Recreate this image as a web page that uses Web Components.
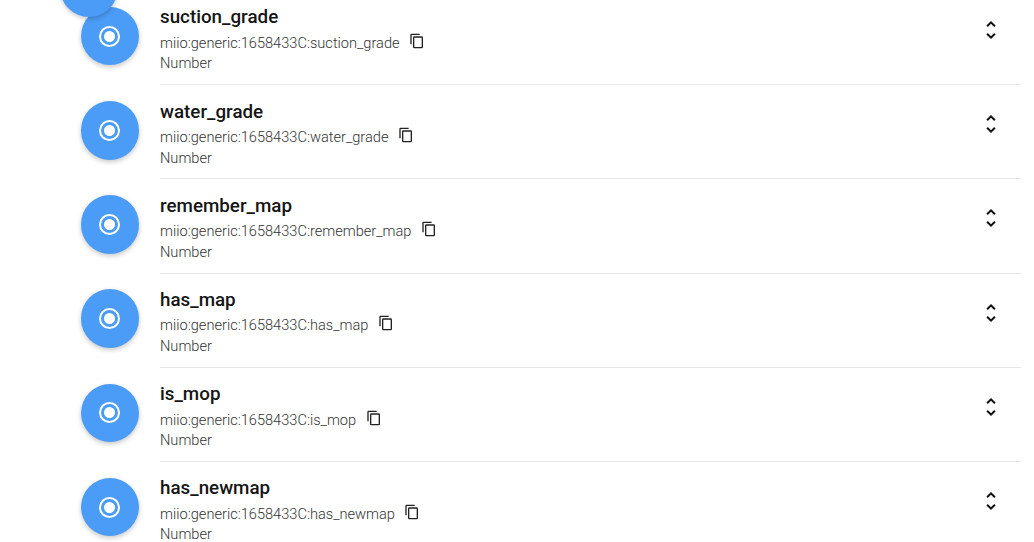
<!DOCTYPE html>
<html>
<head>
<meta charset="utf-8">
<title>Entities</title>
<style>
  html, body { margin: 0; height: 100%; overflow: hidden; background: #fff; }
  body { font-family: Roboto, sans-serif; }
</style>
</head>
<body>
<entity-list>
  <entity-row name="suction_grade"></entity-row>
  <entity-row name="water_grade"></entity-row>
  <entity-row name="remember_map"></entity-row>
  <entity-row name="has_map"></entity-row>
  <entity-row name="is_mop"></entity-row>
  <entity-row name="has_newmap"></entity-row>
</entity-list>

<script>
class EntityList extends HTMLElement {
    constructor() {
        super();
        this.attachShadow({ mode: 'open' });
        this.shadowRoot.innerHTML = `
            <style>
                :host {
                    display: block;
                    position: relative;
                    margin-top: -9px;
                    padding: 0 13px 0 80.5px;
                }
                .fab {
                    position: absolute;
                    left: 59.5px;
                    top: -33px;
                    width: 58.5px;
                    height: 58.5px;
                    border-radius: 50%;
                    background: #4a9cf7;
                    z-index: 1;
                    box-shadow: 0 2px 4px rgba(0, 0, 0, .2);
                }
            </style>
            <div class="fab"></div>
            <slot></slot>
        `;
    }
}

class EntityRow extends HTMLElement {
    constructor() {
        super();
        this.attachShadow({ mode: 'open' });
    }

    connectedCallback() {
        const name = this.getAttribute('name') || '';

        this.shadowRoot.innerHTML = `
            <style>
                :host {
                    display: flex;
                    align-items: center;
                    height: 94.2px;
                }
                .avatar {
                    flex: none;
                    width: 58.5px;
                    height: 58.5px;
                    margin: -4px 21px 0 0;
                    border-radius: 50%;
                    background: #4a9cf7;
                    box-shadow: 0 2px 5px rgba(0, 0, 0, .22);
                    display: flex;
                    align-items: center;
                    justify-content: center;
                }
                .dot {
                    width: 11px;
                    height: 11px;
                    border-radius: 50%;
                    background: #fff;
                    border: 3px solid #4a9cf7;
                    outline: 2px solid #fff;
                    box-sizing: content-box;
                }
                .body {
                    flex: 1;
                    height: 100%;
                    box-sizing: border-box;
                    border-bottom: 1px solid #e6e6e6;
                    display: flex;
                    justify-content: space-between;
                }
                .title {
                    margin-top: 14.4px;
                    font-size: 18.8px;
                    line-height: 24px;
                    font-weight: 500;
                    color: #151515;
                }
                .id {
                    display: flex;
                    align-items: center;
                    gap: 9.5px;
                    margin-top: 3.4px;
                    font-size: 14.6px;
                    line-height: 20px;
                    font-weight: 300;
                    color: #333;
                }
                .kind {
                    margin-top: 0.7px;
                    font-size: 14.6px;
                    line-height: 20px;
                    font-weight: 300;
                    color: #333;
                }
                .copy { width: 16px; height: 16px; margin-top: -4px; fill: #222; }
                .sort { width: 24px; height: 24px; margin: 27px 18px 0 0; fill: #111; }
            </style>
            <div class="avatar"><div class="dot"></div></div>
            <div class="body">
                <div>
                    <div class="title">${name}</div>
                    <div class="id">
                        <span>miio:generic:1658433C:${name}</span>
                        <svg class="copy" viewBox="0 0 24 24"><path d="M19,21H8V7H19M19,5H8A2,2 0 0,0 6,7V21A2,2 0 0,0 8,23H19A2,2 0 0,0 21,21V7A2,2 0 0,0 19,5M16,1H4A2,2 0 0,0 2,3V17H4V3H16V1Z"/></svg>
                    </div>
                    <div class="kind">Number</div>
                </div>
                <svg class="sort" viewBox="0 0 24 24"><path d="M12,18.17L8.83,15L7.41,16.41L12,21L16.59,16.41L15.17,15M12,5.83L15.17,9L16.59,7.59L12,3L7.41,7.59L8.83,9L12,5.83Z"/></svg>
            </div>
        `;
    }
}

customElements.define('entity-list', EntityList);
customElements.define('entity-row', EntityRow);
</script>
</body>
</html>
